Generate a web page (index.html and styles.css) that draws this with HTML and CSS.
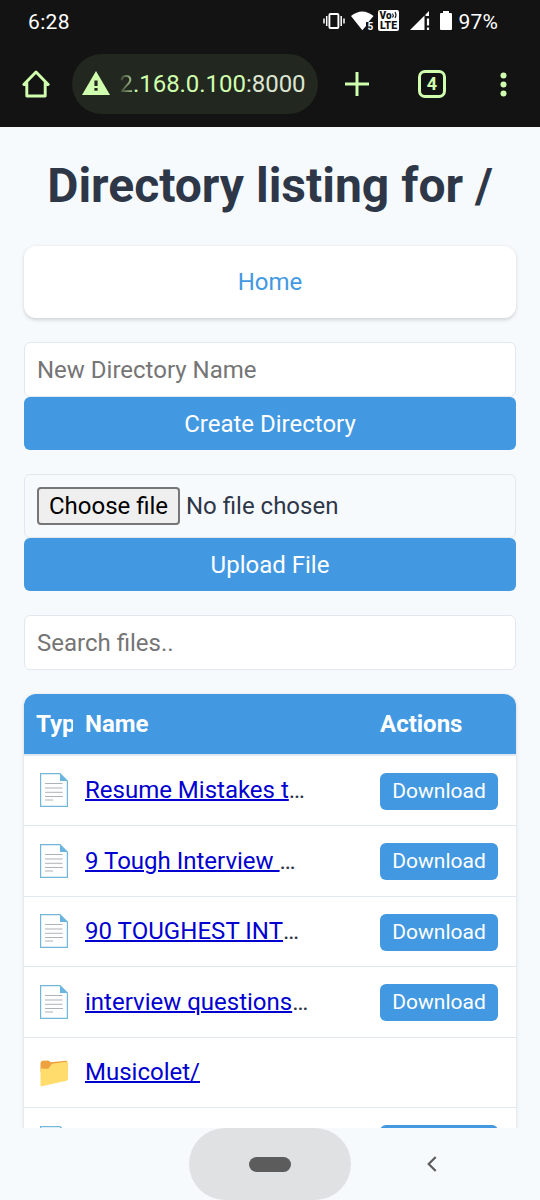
FILE: index.html
```html
<!DOCTYPE html>
<html lang="en">
<head>
<meta charset="utf-8">
<title>Directory listing for /</title>
<link rel="stylesheet" href="styles.css">
</head>
<body>
<svg class="defs" width="0" height="0">
  <symbol id="doc" viewBox="0 0 28 34">
    <path d="M.6.6H20L27.400 8V33.400H.6Z" fill="#fefefe" stroke="#72b7da" stroke-width="1.200"/>
    <path d="M20 .6V8H27.400Z" fill="#69b5df"/>
    <path d="M5 10.500H22.500M5 15H22.500M5 19.300H22.500M5 23.500H23M5 27H13" stroke="#adb3b8" stroke-width="1" fill="none"/>
  </symbol>
  <symbol id="folder" viewBox="0 0 28 27">
    <path d="M.5 3Q1 1 2.300.8L8 .6Q9.500.6 10.500 2.200L26 .8Q27.500.8 27.500 3V8L.5 12Z" fill="#eda13f"/>
    <path d="M.5 8.500 7.500 8.800Q9 8.800 10 6.300L12 3.800 26.500 1.800Q28 1.600 28 3V19Q28 20.300 26.500 20.700L2 26.300Q.5 26.600.5 25Z" fill="#ffdc6c"/>
  </symbol>
</svg>

<header class="status">
  <span class="clock">6:28</span>
  <div class="indicators">
    <svg class="vibrate" width="22" height="16" viewBox="0 0 22 16" fill="none" stroke="#fff"><rect x="6.400" y="1" width="9" height="14" rx="1" stroke-width="1.900"/><path d="M3.700 3V13M18.200 3V13M1 5.500V10.500M21 5.500V10.500" stroke-width="1.500"/></svg>
    <svg class="wifi" width="24" height="22" viewBox="0 0 24 22"><path d="M0 5Q11.200-4 22.500 5L17.500 11H15V15L11.300 19.300Z" fill="#fff"/><text x="16.500" y="19" class="tiny">5</text></svg>
    <svg class="volte" width="21" height="21" viewBox="0 0 21 21"><rect width="21" height="21" rx="2" fill="#fff"/><text x="1.500" y="9.300" textLength="12" class="volte-text">Vo</text><path d="M14.500 3.500Q16 5.500 14.500 7.500M17 2Q19 5 17 8" fill="none" stroke="#131313" stroke-width="1.100"/><text x="2" y="19" textLength="17" lengthAdjust="spacingAndGlyphs" class="volte-text">LTE</text></svg>
    <svg class="signal" width="21" height="19" viewBox="0 0 21 19"><path d="M0 19 14.500 4.500V19ZM15.500 3.500 19 0V5H15.500Z" fill="#fff"/><path d="M18 7.500V14.500M18 16.500V19" stroke="#fff" stroke-width="2.200"/></svg>
    <svg class="battery" width="12" height="19" viewBox="0 0 12 19"><path d="M3 0H9V2H11Q12 2 12 3V18Q12 19 11 19H1Q0 19 0 18V3Q0 2 1 2H3Z" fill="#fff"/></svg>
    <span class="percent">97%</span>
  </div>
</header>

<nav class="toolbar">
  <svg class="home-icon" width="28" height="28" viewBox="0 0 28 28" fill="none" stroke="#d0ffae" stroke-width="2.900" stroke-linejoin="round"><path d="M4.800 14.500H1.800L14 2 26.200 14.500H23.200M4.800 12V26H23.200V12"/></svg>
  <div class="address">
    <svg width="28" height="24" viewBox="0 0 28 24"><path d="M14 0 28 24H0Z" fill="#d0ffae"/><path d="M14 9.500V15M14 17V19.800" stroke="#22271f" stroke-width="3.200"/></svg>
    <span class="url"><span class="url-fade">2</span><span class="url-host">.168.0.100</span>:8000</span>
  </div>
  <svg class="plus" width="24" height="24" viewBox="0 0 24 24" stroke="#d0ffae" stroke-width="3"><path d="M12 0V24M0 12H24"/></svg>
  <div class="tabs">4</div>
  <svg class="more" width="7" height="25" viewBox="0 0 7 25" fill="#d0ffae"><circle cx="3.500" cy="3.500" r="3"/><circle cx="3.500" cy="12.500" r="3"/><circle cx="3.500" cy="21.500" r="3"/></svg>
</nav>

<main class="page">
  <h1>Directory listing for /</h1>
  <div class="crumbs"><a href="#">Home</a></div>
  <form class="group">
    <input class="field" type="text" placeholder="New Directory Name">
    <button class="submit" type="button">Create Directory</button>
  </form>
  <form class="group">
    <div class="field file"><button class="choose" type="button">Choose file</button><span>No file chosen</span></div>
    <button class="submit" type="button">Upload File</button>
  </form>
  <input class="field search" type="text" placeholder="Search files..">
  <section class="listing">
    <div class="row head"><span class="type">Type</span><span>Name</span><span>Actions</span></div>
    <div class="row"><svg class="doc"><use href="#doc"/></svg><span class="name"><a href="#">Resume Mistakes t</a>…</span><button class="download">Download</button></div>
    <div class="row"><svg class="doc"><use href="#doc"/></svg><span class="name"><a href="#">9 Tough Interview </a>…</span><button class="download">Download</button></div>
    <div class="row"><svg class="doc"><use href="#doc"/></svg><span class="name"><a href="#" class="caps">90 TOUGHEST INT</a>…</span><button class="download">Download</button></div>
    <div class="row"><svg class="doc"><use href="#doc"/></svg><span class="name"><a href="#">interview questions</a>…</span><button class="download">Download</button></div>
    <div class="row"><svg class="folder"><use href="#folder"/></svg><span class="name"><a href="#">Musicolet/</a></span></div>
    <div class="row"><svg class="doc"><use href="#doc"/></svg><span></span><button class="download" aria-label="Download"></button></div>
  </section>
</main>

<footer class="navbar">
  <div class="pill"><i></i></div>
  <svg class="back" width="10" height="16" viewBox="0 0 10 16" fill="none" stroke="#5c5c5c" stroke-width="2.200"><path d="M8.700 1 1.700 8 8.700 15"/></svg>
</footer>
</body>
</html>
```
FILE: styles.css
```css
* { box-sizing: border-box; }
body {
  margin: 0;
  width: 540px;
  height: 1200px;
  overflow: hidden;
  display: flex;
  flex-direction: column;
  background: #f7fafc;
  color: #2d3748;
  font: 24px/36px Roboto, sans-serif;
}
.defs { position: absolute; }
svg { display: block; flex: none; }
button, input { font: inherit; }

.status {
  height: 43px;
  flex: none;
  display: flex;
  justify-content: space-between;
  padding: 0 42px 0 28px;
  background: #131313;
  color: #fff;
  font-size: 21px;
  line-height: 44px;
}
.clock { letter-spacing: .35px; }
.indicators { display: flex; align-items: flex-start; }
.vibrate { margin-top: 13px; }
.wifi { margin: 11px 0 0 6px; }
.volte { margin: 10px 0 0 3px; }
.signal { margin: 11px 0 0 11px; }
.battery { margin: 11px 0 0 9px; }
.percent { margin-left: 6px; letter-spacing: .2px; }
.tiny { font: 700 10px Roboto, sans-serif; fill: #fff; }
.volte-text { font: 900 10px Roboto, sans-serif; fill: #131313; }

.toolbar {
  height: 84px;
  flex: none;
  display: flex;
  align-items: center;
  padding: 0 33px 2px 22px;
  background: #131313;
  color: #d0ffae;
}
.address {
  width: 246px;
  height: 60px;
  margin-left: 22px;
  padding-left: 9.500px;
  display: flex;
  align-items: center;
  gap: 10px;
  border-radius: 30px;
  background: #22271f;
}
.address svg { margin-top: -2px; }
.url { color: #dce5d2; white-space: nowrap; letter-spacing: -.04px; }
.url-host { color: #d0ffae; }
.url-fade {
  background: linear-gradient(90deg, #3a4333, #a9cc90);
  -webkit-background-clip: text;
  background-clip: text;
  color: transparent;
}
.plus { margin-left: 27px; }
.tabs {
  width: 28px;
  height: 28px;
  margin: 0 54px 0 49px;
  border: 3px solid #d0ffae;
  border-radius: 7px;
  font-size: 18px;
  font-weight: 700;
  line-height: 22px;
  text-align: center;
}

.page { flex: 1; min-height: 0; overflow: hidden; padding: 29px 24px 0; }
h1 {
  margin: 0 0 30px;
  font-size: 48px;
  line-height: 60px;
  font-weight: 700;
  text-align: center;
  white-space: nowrap;
}
.crumbs {
  height: 72px;
  padding: 18px;
  text-align: center;
  background: #fff;
  border-radius: 12px;
  box-shadow: 0 1.5px 4.5px rgba(0, 0, 0, .1), 0 1.5px 3px rgba(0, 0, 0, .06);
}
.crumbs a { color: #4299e1; text-decoration: none; }
.group { margin: 24px 0 0; }
.field {
  display: block;
  width: 492px;
  height: 55px;
  padding: 0 12px;
  border: 1.500px solid #e2e8f0;
  border-radius: 6px;
  background: #fff;
  color: inherit;
}
.field::placeholder { color: #757575; opacity: 1; }
.submit {
  display: block;
  width: 492px;
  height: 53px;
  border: 0;
  border-radius: 6px;
  background: #4299e1;
  color: #fff;
}
.file {
  height: 64px;
  padding: 0 12px;
  display: flex;
  align-items: center;
  gap: 6px;
  background: transparent;
}
.choose {
  width: 143px;
  height: 38px;
  padding: 0;
  border: 2px solid #767676;
  border-radius: 4px;
  background: #efefef;
  color: #000;
  line-height: 34px;
}
.search { margin-top: 24px; }
.listing {
  margin-top: 24px;
  background: #fff;
  border-radius: 12px 12px 0 0;
  box-shadow: 0 1.5px 4.5px rgba(0, 0, 0, .1), 0 1.5px 3px rgba(0, 0, 0, .06);
}
.row {
  height: 70.500px;
  display: grid;
  grid-template-columns: 49px 295px 148px;
  align-items: center;
  border-bottom: 1.500px solid #e2e8f0;
}
.row > * { margin-left: 12px; }
.head {
  height: 61.500px;
  background: #4299e1;
  background-clip: padding-box;
  border-bottom-width: 2px;
  border-radius: 12px 12px 0 0;
  color: #fff;
  font-weight: 700;
}
.head .type { overflow: hidden; }
.row .doc { width: 28px; height: 34px; margin-left: 16px; }
.row .folder { width: 28px; height: 27px; margin: 2px 0 0 16px; }
.name { color: #2d3748; white-space: pre; }
.name a { color: #0000d0; text-decoration-thickness: 2px; }
.name .caps { letter-spacing: .05px; }
.download {
  width: 118px;
  height: 37px;
  margin-top: 1.500px;
  padding: 0;
  border: 0;
  border-radius: 6px;
  background: #4299e1;
  color: #fff;
  font-size: 21px;
  line-height: 37px;
}
.navbar { height: 72px; flex: none; display: flex; align-items: center; background: #f7fafc; }
.pill {
  width: 162px;
  height: 72px;
  margin-left: 189px;
  display: grid;
  place-items: center;
  border-radius: 36px;
  background: #dfe1e3;
}
.pill i { width: 42px; height: 15px; border-radius: 8px; background: #5c5c5c; }
.back { margin-left: 76px; }
```
